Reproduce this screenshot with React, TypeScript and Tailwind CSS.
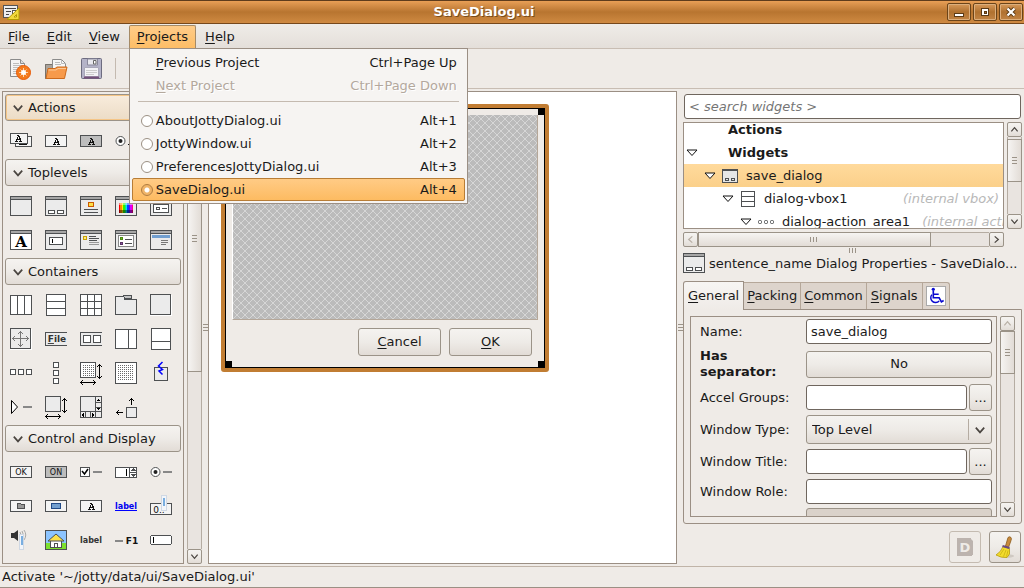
import React from "react";

type Kids = { children?: React.ReactNode };

const RAISED = "border border-[#9b9388] bg-linear-to-b from-[#f5f3f0] via-[#eeebe7] to-[#e2dcd6]";
const FIELD = "h-[25px] w-full min-w-0 rounded-[3px] border border-[#6f665e] bg-white px-1 text-[13px] leading-4 outline-none";

/* ---------- palette icons, each on a 22 x 22 pixel grid ---------- */

function Icon({ children }: Kids) {
  return (
    <svg width="22" height="22" viewBox="0 0 22 22" shapeRendering="crispEdges" fill="none" stroke="#4e5052" className="block overflow-visible" aria-hidden="true">
      {children}
    </svg>
  );
}

function Box({ x = 0, y = 0, w = 22, h = 20, fill = "#ebebeb", r = 1, stroke = "#4e5052" }: { x?: number; y?: number; w?: number; h?: number; fill?: string; r?: number; stroke?: string }) {
  return <rect x={x + 0.5} y={y + 0.5} width={w - 1} height={h - 1} rx={r} fill={fill} stroke={stroke} />;
}

function Win({ children, fill = "#ebebeb" }: Kids & { fill?: string }) {
  return (
    <Icon>
      <Box fill={fill} />
      <path d="M1 1.5h20M1 2.5h20" stroke="#a6a6a6" />
      <path d="M1 3.5h20" />
      {children}
    </Icon>
  );
}

/* Small capital A with slab feet, 7 x 7 */
function SlabA({ x, y }: { x: number; y: number }) {
  return (
    <g transform={`translate(${x} ${y})`} fill="#111" stroke="none">
      <path d="M2 0h2v1h1v2h1v3h1v1h-3v-1h1v-1h-3v1h1v1h-3v-1h1v-2h1v-2h1v-1h-1zM3 2v2h1v-2z" />
    </g>
  );
}

function PixText({ x, y, size = 9, bold = false, fill = "#111", children }: Kids & { x: number; y: number; size?: number; bold?: boolean; fill?: string }) {
  return (
    <text x={x} y={y} fontSize={size} fontWeight={bold ? 700 : 400} fill={fill} stroke="none" textAnchor="middle" fontFamily="DejaVu Sans, sans-serif">
      {children}
    </text>
  );
}

const dots = (x0: number, y0: number, nx: number, ny: number) =>
  Array.from({ length: nx * ny }, (_, i) => (
    <rect key={i} x={x0 + (i % nx) * 2} y={y0 + Math.floor(i / nx) * 2} width="1" height="1" fill="#6a6a6a" stroke="none" />
  ));

const VArrow = () => <path d="M19.5 1v15M18 2.5h3M17 3.5h1M21 3.5h1M18 14.5h3M17 13.5h1M21 13.5h1" stroke="#000" />;
const HArrow = () => <path d="M0 19.5h16M1.5 18v3M2.5 17v1M2.5 21v1M14.5 18v3M13.5 17v1M13.5 21v1" stroke="#000" />;

const actions = [
  <Icon key="group"><Box x={5} y={5} w={17} h={11} fill="#f4f4f4" /><path d="M9 13.5h8M11 12.5h2M15 12.5h3" stroke="#111" /><Box x={0} y={2} w={18} h={11} fill="#f4f4f4" /><SlabA x={5} y={4} /></Icon>,
  <Icon key="act"><Box y={4} h={12} fill="#f4f4f4" /><SlabA x={8} y={7} /></Icon>,
  <Icon key="tog"><Box y={4} h={12} fill="#bdbdbd" /><SlabA x={8} y={7} /></Icon>,
  <Icon key="rad"><circle cx="5.5" cy="10" r="4.5" fill="#fff" shapeRendering="auto" /><circle cx="5.5" cy="10" r="2" fill="#222" stroke="none" shapeRendering="auto" /><SlabA x={13} y={7} /></Icon>,
  <Icon key="rec"><Box y={4} h={12} fill="#f4f4f4" /><SlabA x={8} y={7} /></Icon>,
];

const toplevels = [
  <Win key="window" />,
  <Win key="dialog"><Box x={3} y={14} w={7} h={4} fill="#fff" /><Box x={12} y={14} w={7} h={4} fill="#fff" /></Win>,
  <Win key="about"><rect x="8.5" y="6.5" width="5" height="4" fill="#fbe04a" stroke="#cc5a00" /><path d="M4 13.5h14M4 16.5h14" /></Win>,
  <Win key="color">
    <g stroke="none">
      {["#f00", "#f80", "#fe0", "#3e0", "#0e8", "#0df", "#04f", "#60f", "#d0f", "#f08"].map((c, i) => (
        <rect key={c} x={4 + i * 1.4} y="7" width="1.5" height="10" fill={c} />
      ))}
      <path d="M4 14h14v3h-14z" fill="#000" opacity=".45" />
      <path d="M4 7h14v2h-14z" fill="#fff" opacity=".45" />
    </g>
  </Win>,
  <Win key="file"><path d="M3 5.5h16" stroke="#aaa" /><Box x={3} y={8} w={16} h={9} fill="#fff" /><rect x="6.5" y="11.5" width="3" height="2" /><path d="M12 12.5h5" /></Win>,
  <Win key="font" fill="#fff"><text x="11" y="17" fontSize="15" fontWeight="700" fontFamily="DejaVu Serif, serif" textAnchor="middle" fill="#000" stroke="none">A</text></Win>,
  <Win key="input"><Box x={4} y={7} w={14} h={8} fill="#fff" /><path d="M7.5 9v4" stroke="#000" /></Win>,
  <Win key="message"><rect x="3.5" y="6.5" width="3" height="3" fill="#fbe98a" stroke="#c8a000" /><path d="M9 6.5h7M9 8.5h10M9 10.5h8" /><path d="M9 12.5h10M9 14.5h10" stroke="#999" /></Win>,
  <Win key="recent"><Box x={3} y={5} w={16} h={12} fill="#fff" stroke="#888" /><rect x="5.5" y="7.5" width="2" height="2" fill="#6b3" stroke="#4e8a10" /><rect x="5.5" y="12.5" width="2" height="2" fill="#85a" stroke="#5c3566" /><path d="M10 9.5h7M10 13.5h7" /></Win>,
  <Win key="assistant"><path d="M2 6h18" strokeWidth="3" stroke="#729fcf" /><path d="M11 10.5h7M11 12.5h7M11 14.5h5" stroke="#777" /></Win>,
];

const containers = [
  <Icon key="hbox"><Box fill="#fff" /><path d="M7.5 0v20M14.5 0v20" /></Icon>,
  <Icon key="vbox"><Box x={1} y={-1} w={20} h={22} fill="#fff" /><path d="M1 6.5h20M1 13.5h20" /></Icon>,
  <Icon key="table"><Box y={-1} h={22} fill="#fff" /><path d="M7.5 0v20M14.5 0v20M0 6.5h22M0 13.5h22" /></Icon>,
  <Icon key="notebook"><path d="M.5 19.5v-18.5h8.5v3h12.5v15.5z" fill="#ebebeb" /><path d="M8.5 .5h8v3h-7z" fill="#c4c4c4" /></Icon>,
  <Icon key="frame"><Box y={-1} w={21} h={21} /><path d="M0 20.5h22M21.5 0v20" stroke="#fff" /></Icon>,
  <Icon key="aspect"><Box y={-1} w={21} h={21} /><path d="M0 20.5h22M21.5 0v20" stroke="#fff" /><path d="M10.5 2v16M2 9.5h17M9 3.5h3M9 16.5h3M3.5 8v3M17.5 8v3M4.5 7v1M4.5 11v1M16.5 7v1M16.5 11v1M8 4.5h1M12 4.5h1M8 15.5h1M12 15.5h1" stroke="#777" /></Icon>,
  <Icon key="menubar"><path d="M22 3.5h-21.5v12.5h21.5" fill="#ebebeb" /><PixText x={12} y={13} bold size={9} fill="#333"><tspan textDecoration="underline">F</tspan>ile</PixText></Icon>,
  <Icon key="toolbar"><path d="M22 3.5h-21.5v12.5h21.5" fill="#ebebeb" /><Box x={3} y={6} w={8} h={8} fill="#fff" /><Box x={13} y={6} w={8} h={8} fill="#fff" /></Icon>,
  <Icon key="hpane"><Box h={20} fill="#fff" /><path d="M13.5 0v20" /></Icon>,
  <Icon key="vpane"><Box x={1} y={-1} w={20} h={22} fill="#fff" /><path d="M1 12.5h20" /></Icon>,
  <Icon key="hbb"><Box x={0} y={6} w={6} h={6} fill="#fff" /><Box x={8} y={6} w={6} h={6} fill="#fff" /><Box x={16} y={6} w={6} h={6} fill="#fff" /></Icon>,
  <Icon key="vbb"><Box x={8} y={-1} w={6} h={6} fill="#fff" /><Box x={8} y={7} w={6} h={6} fill="#fff" /><Box x={8} y={15} w={6} h={6} fill="#fff" /></Icon>,
  <Icon key="layout"><Box x={0} y={-1} w={16} h={16} fill="#fff" />{dots(3, 2, 6, 6)}<VArrow /><HArrow /></Icon>,
  <Icon key="fixed"><Box y={-1} h={22} fill="#fff" />{dots(3, 2, 8, 8)}</Icon>,
  <Icon key="event"><Box x={4} y={4} w={14} h={14} /><path d="M12.5 -1l-4 4 4 3.500-3.500 1.500 3.500 3.500" stroke="#00f" strokeWidth="1.5" shapeRendering="auto" /></Icon>,
  <Icon key="expander"><path d="M1.5 3.5v13l6-6.5z" stroke="#000" fill="#fff" shapeRendering="auto" /><path d="M13 10h9" stroke="#888" strokeWidth="2" /></Icon>,
  <Icon key="viewport"><Box x={0} y={-1} w={16} h={16} /><VArrow /><HArrow /></Icon>,
  <Icon key="scrolled"><Box y={-1} h={22} /><path d="M15.5 -1v22M0 14.5h22M16 5.5h5M16 10.5h5M5.5 15v6M10.5 15v6" /><path d="M17 3.5h3M18 2.5h1M17 11.5h3M18 12.5h1M3.5 16v4M2.5 17v2M12.5 16v4M13.5 17v2" stroke="#000" /></Icon>,
  <Icon key="align"><Box x={11} y={10} w={11} h={11} /><path d="M16.5 1v7M15 2.5h3M14 3.5h1M18 3.5h1M1 15.5h7M2.5 14v3M3.5 13v1M3.5 17v1" stroke="#000" /></Icon>,
];

const controls = [
  <Icon key="button"><Box y={4} h={12} fill="#f4f4f4" /><PixText x={11} y={13} size={8}>OK</PixText></Icon>,
  <Icon key="toggle"><Box y={4} h={12} fill="#bdbdbd" /><PixText x={11} y={13} size={8}>ON</PixText></Icon>,
  <Icon key="check"><Box x={0} y={5} w={10} h={10} fill="#fff" /><path d="M2 9l2.500 3 3.500-5" stroke="#000" strokeWidth="1.5" shapeRendering="auto" /><path d="M13 10h9" stroke="#888" strokeWidth="2" /></Icon>,
  <Icon key="spin"><Box y={5} h={11} fill="#fff" /><path d="M14.5 5v11M14 10.5h8M16 8.5h5M17 7.5h3M18 6.5h1M16 12.5h5M17 13.5h3M18 14.5h1" /><path d="M11.5 7v7" stroke="#000" /></Icon>,
  <Icon key="radio"><circle cx="5.5" cy="10" r="4.5" fill="#fff" shapeRendering="auto" /><circle cx="5.5" cy="10" r="2" fill="#222" stroke="none" shapeRendering="auto" /><path d="M13 10h9" stroke="#888" strokeWidth="2" /></Icon>,
  <Icon key="filebtn"><Box y={4} h={12} fill="#f4f4f4" /><path d="M7.5 12.5v-5h3l1 1h3v4z" fill="#999" /></Icon>,
  <Icon key="colorbtn"><Box y={4} h={12} fill="#f4f4f4" /><rect x="6.5" y="7.5" width="9" height="5" fill="#729fcf" stroke="#204a87" /></Icon>,
  <Icon key="fontbtn"><Box y={4} h={12} fill="#f4f4f4" /><SlabA x={8} y={7} /></Icon>,
  <Icon key="link"><PixText x={11} y={13} bold size={8} fill="#0000f0">label</PixText><path d="M0 14.5h22" stroke="#00f" /></Icon>,
  <Icon key="scalebtn"><Box y={7} h={12} fill="#f4f4f4" /><PixText x={9} y={17} size={9}>0..</PixText><path d="M11.5 -.5h5v15h-5z" fill="#f2f5fa" stroke="#cfd8e4" /><path d="M14 2v8" stroke="#79aee0" strokeWidth="2" /></Icon>,
  <Icon key="volume"><path d="M1 3h3l4-3v11l-4-3h-3z" fill="#333" stroke="none" shapeRendering="auto" /><path d="M10 2q2 3 0 6M12 1q3 4 0 8M14 0q3.500 5 0 10" stroke="#aaa" shapeRendering="auto" /><path d="M9.5 4.5h4v15h-4z" fill="#f2f5fa" stroke="#cfd8e4" /><path d="M11.5 6v9" stroke="#79aee0" strokeWidth="2" /></Icon>,
  <Icon key="image"><Box fill="#8cc4ff" /><path d="M1 13h20v6h-20z" fill="#7de02e" stroke="none" /><path d="M5.5 10h11v7h-11z" fill="#fff" /><path d="M3 11l8-7 8 7z" fill="#fbe04a" shapeRendering="auto" /><path d="M9.5 17v-4h3v4" /></Icon>,
  <Icon key="label"><PixText x={11} y={13} bold size={8} fill="#333">label</PixText></Icon>,
  <Icon key="accel"><path d="M0 11h8" stroke="#888" strokeWidth="2" /><PixText x={17} y={14} bold size={9}>F1</PixText></Icon>,
  <Icon key="entry"><Box y={5} h={10} fill="#fff" r={2} /><path d="M3.5 7v6" stroke="#000" /></Icon>,
];

function Chevron({ dir = "down", color = "#4a4540", big = false }: { dir?: "up" | "down" | "left" | "right"; color?: string; big?: boolean }) {
  const d = { down: "M1.5 3l3.500 4 3.500-4", up: "M1.5 7l3.500-4 3.500 4", left: "M7 1.5l-4 3.500 4 3.500", right: "M3 1.5l4 3.500-4 3.500" }[dir];
  const s = big ? 12 : 9;
  return (
    <svg width={s} height={s} viewBox="0 0 10 10" fill="none" stroke={color} strokeWidth="1.4" aria-hidden="true"><path d={d} /></svg>
  );
}

function PaletteGroup({ title, icons, hot = false }: { title: string; icons: React.ReactNode[]; hot?: boolean }) {
  return (
    <section>
      <button className={`flex h-[27px] w-full items-center gap-1 rounded-[3px] px-[6px] text-left ${hot ? "border border-[#9b9388] bg-linear-to-b from-[#f8ecdc] to-[#ecdcc6] inset-ring inset-ring-[#f5c586]" : RAISED}`}>
        <Chevron big />
        {title}
      </button>
      <div className="grid grid-cols-[repeat(5,22px)] auto-rows-[22px] gap-x-[13px] gap-y-3 px-[5px] pt-[10px] pb-[6px]">{icons}</div>
    </section>
  );
}

function ScrollEnd({ dir, off = false }: { dir: "up" | "down" | "left" | "right"; off?: boolean }) {
  return (
    <button aria-label={`Scroll ${dir}`} className={`flex size-[15px] shrink-0 items-center justify-center rounded-[2px] ${RAISED}`}>
      <Chevron dir={dir} color={off ? "#b9b0a6" : "#4a4540"} />
    </button>
  );
}

function Grip({ vertical = false }: { vertical?: boolean }) {
  return vertical ? (
    <svg width="8" height="5" shapeRendering="crispEdges" aria-hidden="true"><path d="M.5 0v5M3.5 0v5M6.5 0v5" stroke="#9b9388" /></svg>
  ) : (
    <svg width="5" height="8" shapeRendering="crispEdges" aria-hidden="true"><path d="M0 .5h5M0 3.5h5M0 6.5h5" stroke="#9b9388" /></svg>
  );
}

function VScroll({ thumb, lead = "", topOff = false }: { thumb: string; lead?: string; topOff?: boolean }) {
  return (
    <div className="flex w-[15px] shrink-0 flex-col bg-[#e9e4e0]">
      <ScrollEnd dir="up" off={topOff} />
      <div className={`flex flex-1 flex-col border-x border-[#b5aca2] ${lead}`}>
        <div className={`-mx-px flex items-center justify-center border border-[#9b9388] bg-linear-to-r from-[#f6f4f2] to-[#e2dcd6] ${thumb}`}><Grip /></div>
      </div>
      <ScrollEnd dir="down" />
    </div>
  );
}

const PaneHandle = () => <div className="flex w-[6px] shrink-0 items-center justify-center"><Grip /></div>;

/* Underlines the mnemonic letter */
function Mn({ t }: { t: string }) {
  return <span><span className="underline underline-offset-2">{t[0]}</span>{t.slice(1)}</span>;
}

/* ---------- window chrome ---------- */

function TitleButton({ label, children }: Kids & { label: string }) {
  return (
    <button aria-label={label} className="flex h-[18px] w-6 items-center justify-center rounded-[2px] border border-[#6b4419] bg-linear-to-b from-[#d79a5a] via-[#b0712f] to-[#c28444] inset-ring inset-ring-[#dcae7c]">
      <svg width="12" height="12" shapeRendering="crispEdges" fill="none" aria-hidden="true">{children}</svg>
    </button>
  );
}

function TitleBar() {
  return (
    <header className="flex h-6 shrink-0 items-center border-t border-b border-t-[#5e3c1c] border-b-[#76481b] bg-linear-to-b from-[#e89f56] via-[#b87530] to-[#cf8a42] pr-px pl-[3px]">
      <svg width="18" height="18" viewBox="0 0 18 18" aria-hidden="true">
        <rect x=".5" y="2.5" width="14" height="12" fill="#eee" stroke="#555" />
        <path d="M2 5.5h11M3 8.5h5M3 11.5h3" stroke="#444" />
        <rect x="9.5" y="7.5" width="3" height="3" fill="#fff" stroke="#555" />
        <path d="M16 5v11.5h-12z" fill="#f0d83c" stroke="#b59a00" />
        <path d="M13.5 11.5v2.500h-2.500z" fill="#fff6a8" stroke="#b59a00" />
      </svg>
      <h1 className="flex-1 text-center font-bold text-white [text-shadow:1px_1px_0_#7a4c1c]">SaveDialog.ui</h1>
      <div className="flex gap-[2px]">
        <TitleButton label="Minimize"><path d="M1 7h10v4h-10z" fill="#5b3a16" /><path d="M2 8h8v2h-8z" fill="#fff" /></TitleButton>
        <TitleButton label="Maximize"><path d="M2 2h8v8h-8z" fill="#5b3a16" /><path d="M3 3h6v6h-6z" fill="#fff" /><path d="M5 5h2v2h-2z" fill="#b0712f" stroke="#5b3a16" /></TitleButton>
        <TitleButton label="Close"><path d="M2.5 2.5l7 7M9.5 2.5l-7 7" stroke="#5b3a16" strokeWidth="4" shapeRendering="auto" /><path d="M2.5 2.5l7 7M9.5 2.5l-7 7" stroke="#fff" strokeWidth="2.2" shapeRendering="auto" /></TitleButton>
      </div>
    </header>
  );
}

const projects = ["AboutJottyDialog.ui", "JottyWindow.ui", "PreferencesJottyDialog.ui", "SaveDialog.ui"];

function ProjectsMenu() {
  return (
    <div className="absolute top-[23px] left-0 z-10 w-[339px] border border-[#9b8f84] bg-[#f6f4f2] p-[2px]">
      <button className="flex h-[23px] w-full items-center justify-between pr-2 pl-6"><Mn t="Previous Project" /><span>Ctrl+Page Up</span></button>
      <button disabled className="flex h-[23px] w-full items-center justify-between pr-2 pl-6 text-[#b3a89d] [text-shadow:1px_1px_0_#fff]"><Mn t="Next Project" /><span>Ctrl+Page Down</span></button>
      <hr className="mx-[6px] mt-1 mb-[7px] border-t border-[#c4bab0]" />
      {projects.map((p, i) => {
        const on = i === 3;
        return (
          <label key={p} className={`flex h-[23px] items-center rounded-[2px] border pr-[7px] pl-2 ${on ? "border-[#b87d36] bg-linear-to-b from-[#ffcb85] to-[#fdbb61]" : "border-transparent"}`}>
            <input type="radio" name="project" defaultChecked={on} className="mr-[3px] size-3 appearance-none rounded-full border border-[#9b9084] bg-white checked:border-[#b07a3a] checked:bg-[radial-gradient(circle,#fff_0,#fff_2px,#f0b468_3px)]" />
            <span className="flex-1">{p}</span>
            <span>Alt+{i + 1}</span>
          </label>
        );
      })}
    </div>
  );
}

function MenuBar() {
  return (
    <nav className="flex h-[25px] shrink-0 gap-px border-b border-[#c8bdb3] bg-linear-to-b from-[#efece8] to-[#e4dfda] pt-px">
      <button className="px-2"><Mn t="File" /></button>
      <button className="px-2"><Mn t="Edit" /></button>
      <button className="px-2"><Mn t="View" /></button>
      <div className="relative">
        <button className="h-full rounded-t-[2px] border border-b-0 border-[#a58a66] bg-linear-to-b from-[#ffcc88] to-[#fdbd66] px-[7px]"><Mn t="Projects" /></button>
        <ProjectsMenu />
      </div>
      <button className="px-2"><Mn t="Help" /></button>
    </nav>
  );
}

const Page = () => (
  <g><path d="M2.5 2.5h10l4 4v13h-14z" fill="#f4f4f4" stroke="#8b8b8b" /><path d="M12.5 2.5v4h4" fill="#ddd" stroke="#8b8b8b" /><path d="M5 6.5h6M5 8.5h9M5 10.5h9M5 12.5h9M5 14.5h7M5 16.5h5" stroke="#bdbdbd" /></g>
);

function Toolbar() {
  return (
    <div className="flex h-10 shrink-0 items-center gap-3 border-b border-[#c8bdb3] pl-2">
      <button aria-label="New"><svg className="block" width="24" height="24" viewBox="0 0 24 24"><Page /><circle cx="15.5" cy="15.5" r="7" fill="#f47a1d" stroke="#e85a06" /><path d="M15.5 11v9M11 15.5h9M12.5 12.5l6 6M18.5 12.5l-6 6" stroke="#fbd3ae" /><circle cx="15.5" cy="15.5" r="2.5" fill="#fff" /></svg></button>
      <button aria-label="Open"><svg className="block" width="24" height="24" viewBox="0 0 24 24"><path d="M1.5 21.5v-14h7v-2h2" fill="#b9b4ae" stroke="#77726c" /><path d="M1.5 7.5h7l1 2h10v12h-18z" fill="#aaa39b" stroke="#77726c" /><path d="M8.5 2.5h9l4 4v8h-13z" fill="#f6f6f6" stroke="#8b8b8b" /><path d="M17.5 2.5v4h4M11 5.5h5M11 7.5h6" stroke="#bbb" fill="none" /><path d="M4 11.5h7l2-1.500h10l-2.500 11.500h-18.500z" fill="#f79a4b" stroke="#cc6a1c" /><path d="M4.5 13h7.500l2-1.500h8" stroke="#fcc896" fill="none" /></svg></button>
      <button aria-label="Save"><svg className="block" width="24" height="24" viewBox="0 0 24 24"><rect x="1.5" y="1.5" width="20" height="20" rx="1" fill="#b4b3c8" stroke="#6d6c80" /><path d="M4.5 10.5h14v9h-14z" fill="#f3f3f6" stroke="#aaa9ba" /><path d="M6 13.5h11M6 15.5h11M6 17.5h8" stroke="#ccc" /><path d="M7.5 2h10v6h-10z" fill="#e8e8ee" stroke="#8a899c" /><path d="M13.5 3.5h2.500v3.500h-2.500z" fill="#fff" stroke="#666" /><path d="M4 20.5h15" stroke="#75507b" strokeWidth="2" /></svg></button>
      <div className="-ml-px h-[21px] border-l border-[#c4bab0]" />
    </div>
  );
}

/* ---------- design canvas ---------- */

function Canvas() {
  return (
    <main className="min-w-0 flex-1 overflow-hidden border border-[#9b8f84] bg-white p-3">
      <div className="relative flex h-[268px] w-[328px] flex-col rounded-[3px] border-4 border-[#c17d33] bg-[#efebe7]">
        <div className="flex flex-1 flex-col border border-black p-[6px]">
          <svg className="min-h-0 w-full flex-1 border-r border-b border-l border-[#b5a799] border-l-white" shapeRendering="crispEdges" aria-label="Empty placeholder">
            <defs>
              <pattern id="hatch" width="8" height="8" patternUnits="userSpaceOnUse">
                <rect width="8" height="8" fill="#bbb" />
                <path fill="#d6d6d6" d="M3 0h2v1h-2zM2 1h1v1h-1zM5 1h1v1h-1zM1 2h1v1h-1zM6 2h1v1h-1zM0 3h1v2h-1zM7 3h1v2h-1zM1 5h1v1h-1zM6 5h1v1h-1zM2 6h1v1h-1zM5 6h1v1h-1zM3 7h2v1h-2z" />
              </pattern>
            </defs>
            <rect width="100%" height="100%" fill="url(#hatch)" />
          </svg>
          <div className="flex justify-end gap-2 px-[6px] pt-2 pb-[5px]">
            <button className={`h-7 w-[83px] rounded-[3px] ${RAISED}`}><Mn t="Cancel" /></button>
            <button className={`h-7 w-[83px] rounded-[3px] ${RAISED}`}><Mn t="OK" /></button>
          </div>
        </div>
        <i className="absolute top-0 left-0 size-[7px] bg-black" />
        <i className="absolute top-0 right-0 size-[7px] bg-black" />
        <i className="absolute bottom-0 left-0 size-[7px] bg-black" />
        <i className="absolute right-0 bottom-0 size-[7px] bg-black" />
      </div>
    </main>
  );
}

/* ---------- inspector ---------- */

const Tri = () => <svg className="shrink-0" width="12" height="8" viewBox="0 0 12 8" aria-hidden="true"><path d="M1 1h10l-5 5.500z" fill="#fff" stroke="#111" /></svg>;

function Tree() {
  const row = "flex h-[23px] items-center whitespace-nowrap";
  return (
    <div className="h-[107px] min-w-0 flex-1 overflow-hidden border border-[#9b8f84] bg-white">
      <ul className="-mt-[5px]">
        <li className={`${row} pl-11 font-bold`}>Actions</li>
        <li className={`${row} gap-[30px] pl-[2px] font-bold`}><Tri />Widgets</li>
        <li className={`${row} bg-linear-to-b from-[#ffda9c] to-[#fbd08a] pl-5`}>
          <Tri />
          <svg className="mr-2 ml-[6px]" width="16" height="14" shapeRendering="crispEdges" fill="#e6e6e6" stroke="#4e5052" aria-hidden="true"><rect x=".5" y=".5" width="15" height="13" /><path d="M0 1.5h16M3 9.5h3v2h-3zM9 9.5h3v2h-3z" /></svg>
          save_dialog
        </li>
        <li className={`${row} pr-1 pl-[38px]`}>
          <Tri />
          <svg className="mr-[9px] ml-[7px]" width="14" height="16" shapeRendering="crispEdges" fill="#fff" stroke="#4e5052" aria-hidden="true"><rect x=".5" y=".5" width="13" height="15" /><path d="M0 5.5h14M0 10.5h14" /></svg>
          dialog-vbox1
          <em className="ml-auto text-[#b8b8b8]">(internal vbox)</em>
        </li>
        <li className={`${row} pl-14`}>
          <Tri />
          <svg className="mr-[7px] ml-[6px] shrink-0" width="17" height="6" fill="#fff" stroke="#4e5052" aria-hidden="true"><rect x=".5" y="1.5" width="3" height="3" rx="1" /><rect x="6.5" y="1.5" width="3" height="3" rx="1" /><rect x="12.5" y="1.5" width="3" height="3" rx="1" /></svg>
          dialog-action_area1
          <em className="ml-3 text-[#b8b8b8]">(internal action_area)</em>
        </li>
      </ul>
    </div>
  );
}

function Properties() {
  const row = "grid grid-cols-[106px_1fr] items-center";
  const small = `h-[27px] w-[23px] shrink-0 rounded-[3px] ${RAISED}`;
  return (
    <div className="min-h-0 min-w-0 flex-1 overflow-hidden border border-[#9b8f84] pt-[2px] pr-1 pl-[9px]">
      <div className="flex flex-col gap-1">
        <div className={row}><label htmlFor="p-name">Name:</label><input id="p-name" className={FIELD} defaultValue="save_dialog" /></div>
        <div className={row}><span className="w-20 leading-4 font-bold">Has separator:</span><button className={`h-[27px] rounded-[3px] ${RAISED}`}>No</button></div>
        <div className={row}><label htmlFor="p-accel">Accel Groups:</label><div className="flex items-center gap-[2px]"><input id="p-accel" className={FIELD} /><button aria-label="Edit accel groups" className={small}>...</button></div></div>
        <div className={row}>
          <label htmlFor="p-type">Window Type:</label>
          <div className={`relative h-[29px] rounded-[3px] ${RAISED}`}>
            <select id="p-type" className="h-full w-full appearance-none bg-transparent px-[5px] outline-none"><option>Top Level</option><option>Popup</option></select>
            <span className="pointer-events-none absolute inset-y-[3px] right-0 flex w-[23px] items-center justify-center border-l border-[#b5aca2]"><Chevron big /></span>
          </div>
        </div>
        <div className={row}><label htmlFor="p-title">Window Title:</label><div className="flex items-center gap-[2px]"><input id="p-title" className={FIELD} /><button aria-label="Edit window title" className={small}>...</button></div></div>
        <div className={row}><label htmlFor="p-role">Window Role:</label><input id="p-role" className={FIELD} /></div>
        <div className={row}><span>Resizable:</span><button className="h-[27px] rounded-[3px] border border-[#9b9388] bg-[#dad2ca]">Yes</button></div>
      </div>
    </div>
  );
}

function Inspector() {
  const tab = "h-[27px] border-t border-r border-[#b5a799] bg-[#ddd4cc]";
  return (
    <aside className="flex w-[341px] shrink-0 flex-col pr-[2px]">
      <input aria-label="Search widgets" placeholder="< search widgets >" className="mx-px mt-[3px] mb-[3px] h-[25px] rounded-[3px] border border-[#6f665e] bg-white px-1 italic outline-none placeholder:text-[#757575]" />
      <div className="flex gap-[3px]">
        <Tree />
        <VScroll lead="pt-[2px]" thumb="h-[43px]" />
      </div>
      <div className="mt-[3px] mr-[18px] flex h-[15px] bg-[#e9e4e0]">
        <ScrollEnd dir="left" off />
        <div className="flex-1 border-y border-[#b5aca2]"><div className="-my-px flex h-[15px] w-4/5 items-center justify-center border border-[#9b9388] bg-linear-to-b from-[#f6f4f2] to-[#e2dcd6]"><Grip vertical /></div></div>
        <ScrollEnd dir="right" />
      </div>
      <div className="flex h-[7px] shrink-0 items-center justify-center"><Grip vertical /></div>
      <div className="flex h-5 shrink-0 items-center gap-1 whitespace-nowrap">{toplevels[1]}<h2>sentence_name Dialog Properties - SaveDialo...</h2></div>
      <div className="mt-[7px] flex shrink-0 items-end">
        <button className="z-[1] -mb-px h-[29px] rounded-tl-[3px] border border-b-0 border-[#9b8f84] bg-linear-to-b from-[#f7f5f3] to-[#efebe7] px-1"><Mn t="General" /></button>
        <button className={`${tab} px-[3px]`}><Mn t="Packing" /></button>
        <button className={`${tab} px-[3px]`}><Mn t="Common" /></button>
        <button className={`${tab} px-1`}><Mn t="Signals" /></button>
        <button aria-label="Accessibility" className={`${tab} rounded-tr-[3px] px-[3px]`}>
          <svg width="20" height="20" viewBox="0 0 20 20" className="block border border-[#aaa] bg-white" fill="none" stroke="#0a0ad0" aria-hidden="true">
            <circle cx="7" cy="2.6" r="1.8" fill="#0a0ad0" stroke="none" />
            <path d="M7 4.5v7.500h6.500l2.500 4.500 2.500-1.500M7 8h6" strokeWidth="1.8" />
            <path d="M5.500 8.500a5.200 5.200 0 1 0 8 7" strokeWidth="1.6" />
          </svg>
        </button>
      </div>
      <div className="flex min-h-0 flex-1 gap-[3px] rounded-b-[3px] border border-[#9b8f84] p-[6px]">
        <Properties />
        <VScroll topOff thumb="h-[43px]" />
      </div>
      <div className="flex shrink-0 justify-end gap-2 pt-[7px] pr-px pb-px">
        <button disabled aria-label="Documentation" className="flex size-8 items-center justify-center rounded-[3px] border border-[#c4bbb1]">
          <svg width="18" height="20" viewBox="0 0 18 20" aria-hidden="true"><path d="M1 1h14v1l2 2v14h-1v1h-15z" fill="#bcb3ae" /><text x="9" y="15" fontSize="13" fontWeight="700" textAnchor="middle" fill="#efebe7" fontFamily="DejaVu Sans, sans-serif">D</text></svg>
        </button>
        <button aria-label="Clear" className={`flex size-8 items-center justify-center rounded-[3px] ${RAISED}`}>
          <svg width="24" height="24" viewBox="0 0 24 24" aria-hidden="true">
            <ellipse cx="14" cy="21" rx="7" ry="1.8" fill="#cfc9c2" />
            <path d="M12.500 11l2.500-8.500q1.500-1.500 3 0 .8 1.200 0 3l-2.500 7z" fill="#c88a3c" stroke="#8a5a1c" strokeWidth=".8" />
            <path d="M10 11.500l6.500 2v5.500l-2.500 3.500q-6 .5-11-2.500 5-3 7-8.500z" fill="#f3dc2c" stroke="#b89c0a" strokeWidth=".8" />
            <path d="M11 14l-4 6M13 15l-2.500 6.500M15 15.500l-1.500 6" stroke="#c8ae14" strokeWidth=".8" />
            <path d="M9.500 11l7 2" stroke="#6a4a80" strokeWidth="2.2" />
          </svg>
        </button>
      </div>
    </aside>
  );
}

export default function App() {
  return (
    <div className="flex h-screen flex-col overflow-hidden bg-[#efebe7] font-['DejaVu_Sans',sans-serif] text-[13px] leading-4 text-[#1a1a1a]">
      <TitleBar />
      <MenuBar />
      <Toolbar />
      <div className="flex min-h-0 flex-1 pt-[2px] pb-[2px] pl-[2px]">
        <div className="flex w-[182px] shrink-0 flex-col overflow-hidden border border-[#9b8f84] p-[2px]">
          <PaletteGroup title="Actions" icons={actions} hot />
          <PaletteGroup title="Toplevels" icons={toplevels} />
          <PaletteGroup title="Containers" icons={containers} />
          <PaletteGroup title="Control and Display" icons={controls} />
        </div>
        <div className="ml-[3px] flex"><VScroll thumb="h-[60%]" /></div>
        <PaneHandle />
        <Canvas />
        <PaneHandle />
        <Inspector />
      </div>
      <footer className="h-[22px] shrink-0 border-t border-b border-t-[#c0b4a8] border-b-[#9b8f84] px-[2px] pt-[2px]">Activate '~/jotty/data/ui/SaveDialog.ui'</footer>
    </div>
  );
}
